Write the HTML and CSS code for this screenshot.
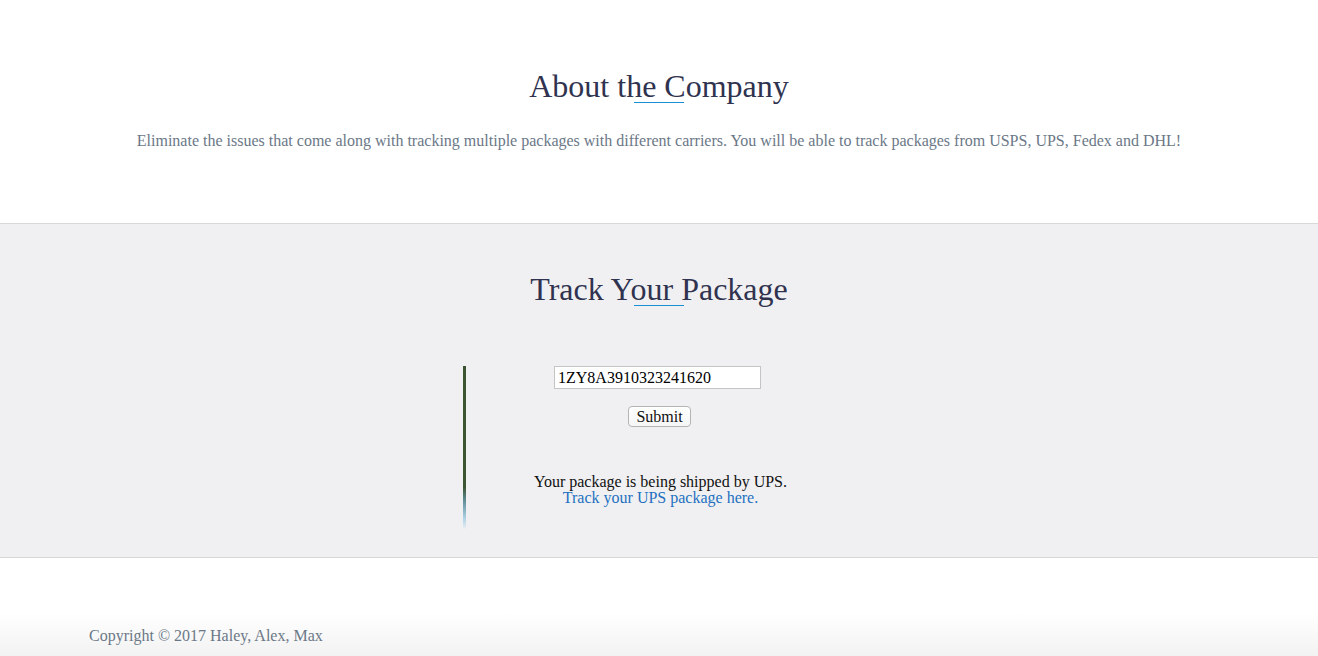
FILE: index.html
```html
<!DOCTYPE html>
<html lang="en">
<head>
<meta charset="utf-8">
<title>Package Tracker</title>
<link rel="stylesheet" href="styles.css">
</head>
<body>
  <section class="about">
    <h2 class="title">About the Company</h2>
    <p class="lead">Eliminate the issues that come along with tracking multiple packages with different carriers. You will be able to track packages from USPS, UPS, Fedex and DHL!</p>
  </section>
  <section class="track">
    <h2 class="title">Track Your Package</h2>
    <div class="tracker">
      <form class="track-form" onsubmit="return false;">
        <input class="track-input" type="text" value="1ZY8A3910323241620">
        <button class="track-btn" type="submit">Submit</button>
      </form>
      <div class="result">
        <div>Your package is being shipped by UPS.</div>
        <a class="result-link" href="#">Track your UPS package here.</a>
      </div>
    </div>
  </section>
  <footer class="footer">
    <p class="copy">Copyright © 2017 Haley, Alex, Max</p>
  </footer>
</body>
</html>
```

FILE: styles.css
```css
* { box-sizing: border-box; }
html, body {
  margin: 0;
  padding: 0;
  background: #ffffff;
}
body {
  font-family: "Liberation Serif", "Times New Roman", serif;
  font-size: 16px;
  color: #000;
}
.title {
  margin: 0;
  font-size: 32px;
  font-weight: normal;
  line-height: 37px;
  color: #30334f;
  text-align: center;
}
.title::after {
  content: "";
  display: block;
  width: 50px;
  height: 1px;
  margin: -3px auto 2px;
  background: #1b8fd3;
}
.about {
  padding: 68px 0 0;
  height: 224px;
  border-bottom: 1px solid #d8d8d8;
  text-align: center;
}
.lead {
  margin: 27px 0 0;
  font-size: 16px;
  line-height: 22px;
  color: #6b7887;
}
.track {
  background: #f0f0f2;
  padding: 47px 0 28px;
  border-bottom: 1px solid #d8d8d8;
}
.tracker {
  width: 392px;
  margin: 60px 0 0 463px;
  border-left: 3px solid #3c5431;
  border-image: linear-gradient(to bottom, #3c5431 0%, #3c5431 74%, #5f8c97 82%, #a7cde0 92%, #eef2f6 100%) 1;
  padding-bottom: 23px;
  text-align: center;
}
.track-form {
  margin: 0;
  display: flex;
  flex-direction: column;
  align-items: center;
}
.track-input {
  width: 207px;
  height: 23px;
  margin-left: -6px;
  padding: 1px 3px;
  border: 1px solid #c4c4c4;
  background: #fff;
  font-family: "Liberation Serif", "Times New Roman", serif;
  font-size: 16px;
  color: #000;
  outline: none;
}
.track-btn {
  margin: 17px 0 0 -2px;
  width: 63px;
  height: 21px;
  padding: 0;
  border: 1px solid #b4b4b4;
  border-radius: 4px;
  background: linear-gradient(#ffffff, #f6f6f6);
  font-family: "Liberation Serif", "Times New Roman", serif;
  font-size: 16px;
  line-height: 18px;
  color: #111;
}
.result {
  margin-top: 47px;
  line-height: 16px;
  font-size: 16px;
  color: #111;
}
.result-link {
  color: #2470c0;
  text-decoration: none;
}
.footer {
  height: 99px;
  background: linear-gradient(to bottom, #ffffff 0%, #ffffff 55%, #f2f2f2 100%);
  padding: 69px 0 0 89px;
}
.copy {
  margin: 0;
  font-size: 16px;
  line-height: 18px;
  color: #6b7887;
}
```
